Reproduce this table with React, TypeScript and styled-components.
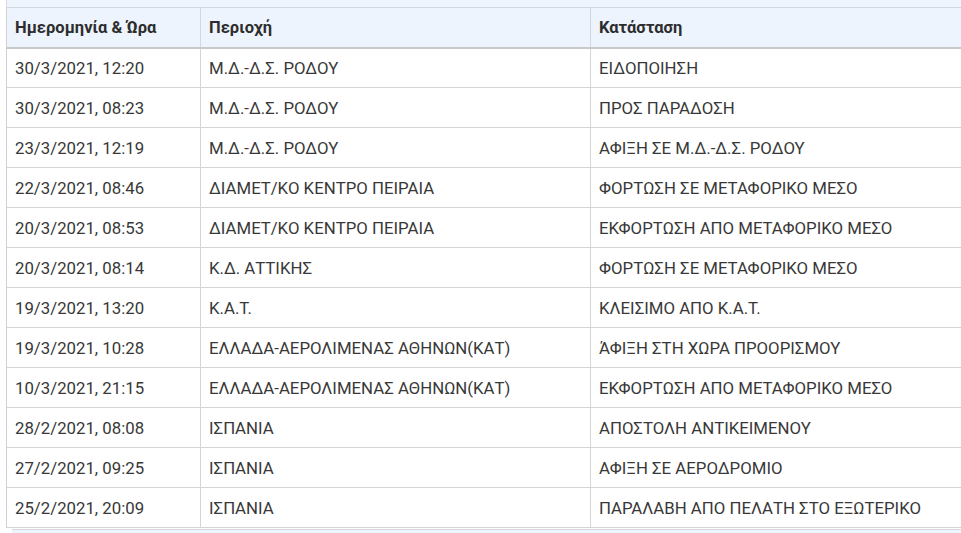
import React from "react";
import styled, { createGlobalStyle } from "styled-components";

const Global = createGlobalStyle`
  html, body { margin: 0; padding: 0; background: #ffffff; overflow: hidden; }
  body { font-family: Roboto, "Noto Sans", "Liberation Sans", sans-serif; color: #333; }
`;

const Page = styled.div`
  width: 961px;
  height: 533px;
  overflow: hidden;
  background: #ffffff;
`;

const TopStrip = styled.div`
  height: 7px;
  margin-left: 6px;
  background: #eef5fe;
  border-left: 1px solid #d6dbe2;
`;

const Frame = styled.div`
  padding-left: 6px;
`;

const Table = styled.table`
  width: 1010px;
  border-collapse: collapse;
  table-layout: fixed;
  border-left: 1px solid #d0d0d0;
`;

const HeadRow = styled.tr`
  background: #edf4fd;
  border-top: 1px solid #d3d8df;
  border-bottom: 2px solid #c9c9c9;
`;

const Th = styled.th<{ $w: number }>`
  width: ${(p) => p.$w}px;
  height: 40px;
  padding: 0 8px;
  text-align: left;
  font-weight: 700;
  font-size: 16.5px;
  color: #2d2d2d;
  border-right: 1px solid #d3d8df;
  box-sizing: border-box;
`;

const Row = styled.tr`
  border-bottom: 1px solid #d4d4d4;
`;

const Td = styled.td`
  height: 40px;
  padding: 0 8px;
  font-size: 16.8px;
  color: #383838;
  border-right: 1px solid #d4d4d4;
  white-space: nowrap;
  box-sizing: border-box;
`;

const BottomStrip = styled.div`
  height: 8px;
  margin-left: 6px;
  margin-top: 1px;
  background: #eef5fe;
  border-top: 1px solid #d3d8df;
`;

const rows: [string, string, string][] = [
  ["30/3/2021, 12:20", "Μ.Δ.-Δ.Σ. ΡΟΔΟΥ", "ΕΙΔΟΠΟΙΗΣΗ"],
  ["30/3/2021, 08:23", "Μ.Δ.-Δ.Σ. ΡΟΔΟΥ", "ΠΡΟΣ ΠΑΡΑΔΟΣΗ"],
  ["23/3/2021, 12:19", "Μ.Δ.-Δ.Σ. ΡΟΔΟΥ", "ΑΦΙΞΗ ΣΕ Μ.Δ.-Δ.Σ. ΡΟΔΟΥ"],
  ["22/3/2021, 08:46", "ΔΙΑΜΕΤ/ΚΟ ΚΕΝΤΡΟ ΠΕΙΡΑΙΑ", "ΦΟΡΤΩΣΗ ΣΕ ΜΕΤΑΦΟΡΙΚΟ ΜΕΣΟ"],
  ["20/3/2021, 08:53", "ΔΙΑΜΕΤ/ΚΟ ΚΕΝΤΡΟ ΠΕΙΡΑΙΑ", "ΕΚΦΟΡΤΩΣΗ ΑΠΟ ΜΕΤΑΦΟΡΙΚΟ ΜΕΣΟ"],
  ["20/3/2021, 08:14", "Κ.Δ. ΑΤΤΙΚΗΣ", "ΦΟΡΤΩΣΗ ΣΕ ΜΕΤΑΦΟΡΙΚΟ ΜΕΣΟ"],
  ["19/3/2021, 13:20", "Κ.Α.Τ.", "ΚΛΕΙΣΙΜΟ ΑΠΟ Κ.Α.Τ."],
  ["19/3/2021, 10:28", "ΕΛΛΑΔΑ-ΑΕΡΟΛΙΜΕΝΑΣ ΑΘΗΝΩΝ(ΚΑΤ)", "ΆΦΙΞΗ ΣΤΗ ΧΩΡΑ ΠΡΟΟΡΙΣΜΟΥ"],
  ["10/3/2021, 21:15", "ΕΛΛΑΔΑ-ΑΕΡΟΛΙΜΕΝΑΣ ΑΘΗΝΩΝ(ΚΑΤ)", "ΕΚΦΟΡΤΩΣΗ ΑΠΟ ΜΕΤΑΦΟΡΙΚΟ ΜΕΣΟ"],
  ["28/2/2021, 08:08", "ΙΣΠΑΝΙΑ", "ΑΠΟΣΤΟΛΗ ΑΝΤΙΚΕΙΜΕΝΟΥ"],
  ["27/2/2021, 09:25", "ΙΣΠΑΝΙΑ", "ΑΦΙΞΗ ΣΕ ΑΕΡΟΔΡΟΜΙΟ"],
  ["25/2/2021, 20:09", "ΙΣΠΑΝΙΑ", "ΠΑΡΑΛΑΒΗ ΑΠΟ ΠΕΛΑΤΗ ΣΤΟ ΕΞΩΤΕΡΙΚΟ"],
];

export default function App() {
  return (
    <Page>
      <Global />
      <TopStrip />
      <Frame>
        <Table>
          <thead>
            <HeadRow>
              <Th $w={194}>Ημερομηνία &amp; Ώρα</Th>
              <Th $w={390}>Περιοχή</Th>
              <Th $w={426}>Κατάσταση</Th>
            </HeadRow>
          </thead>
          <tbody>
            {rows.map((r, i) => (
              <Row key={i}>
                <Td>{r[0]}</Td>
                <Td>{r[1]}</Td>
                <Td>{r[2]}</Td>
              </Row>
            ))}
          </tbody>
        </Table>
        <BottomStrip />
      </Frame>
    </Page>
  );
}
